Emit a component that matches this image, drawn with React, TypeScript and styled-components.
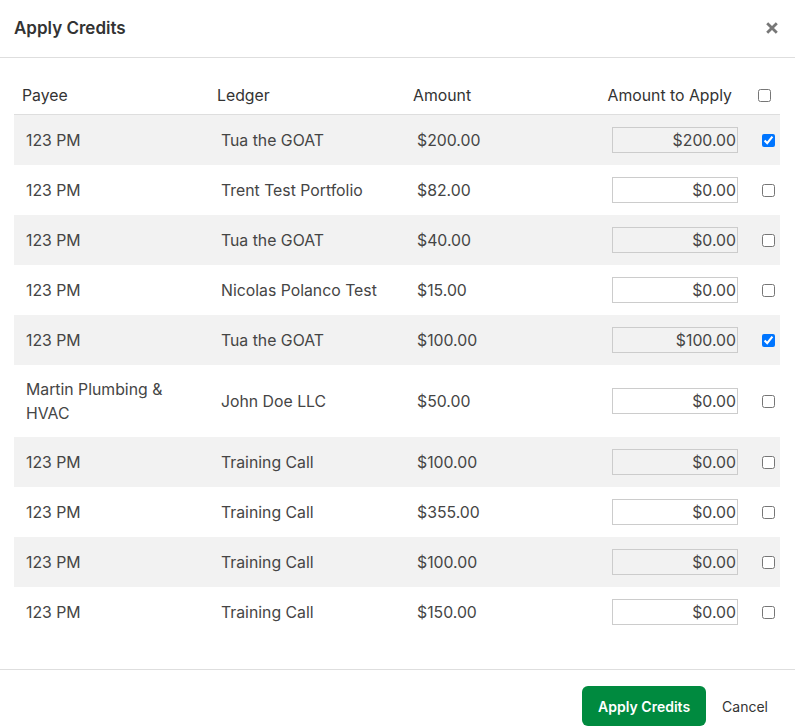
import styled, { createGlobalStyle } from 'styled-components';

const GlobalStyle = createGlobalStyle`
  html, body {
    margin: 0;
    padding: 0;
    background: #ffffff;
  }

  body {
    font-family: Inter, "Noto Sans", "Liberation Sans", sans-serif;
  }
`

const Modal = styled.div`
  width: 795px;
  height: 728px;
  background: #ffffff;
  display: flex;
  flex-direction: column;
  overflow: hidden;
`

const Header = styled.div`
  box-sizing: border-box;
  height: 58px;
  border-bottom: 1px solid #dedede;
  display: flex;
  align-items: center;
  justify-content: space-between;
  padding: 0 16px 1px 14px;
  flex-shrink: 0;
`

const Title = styled.h2`
  margin: 0;
  font-size: 17px;
  font-weight: 600;
  color: #333333;
`

const CloseButton = styled.button`
  border: none;
  background: none;
  padding: 0;
  width: 14px;
  height: 14px;
  display: flex;
  align-items: center;
  justify-content: center;
  cursor: pointer;
`

const Body = styled.div`
  flex: 1;
  padding: 17px 15px 0 14px;
`

const Table = styled.div`
  display: grid;
  grid-template-columns: 195px 196px 1fr 150px 30px;
`

const Row = styled.div`
  display: contents;
`

const HeadCell = styled.div<{ $right?: boolean; $padRight?: number }>`
  height: 38px;
  border-bottom: 1px solid #dedede;
  display: flex;
  align-items: center;
  justify-content: ${(p) => (p.$right ? 'flex-end' : 'flex-start')};
  padding: 1px ${(p) => p.$padRight ?? 8}px 0 ${(p) => (p.$right ? 0 : 8)}px;
  white-space: nowrap;
  font-size: 15.8px;
  color: #333333;
`

const Cell = styled.div<{ $shaded: boolean; $right?: boolean }>`
  background: ${(p) => (p.$shaded ? '#f2f2f2' : '#ffffff')};
  padding: 12px;
  display: flex;
  align-items: center;
  justify-content: ${(p) => (p.$right ? 'flex-end' : 'flex-start')};
  font-size: 15.8px;
  line-height: 24px;
  color: #454545;
`

const CellText = styled.span`
  position: relative;
  top: 1px;
`

const CheckCell = styled(Cell)`
  padding: 12px 0 12px 12px;
`

const AmountInput = styled.input`
  width: 126px;
  height: 26px;
  box-sizing: border-box;
  border: 1px solid #cccccc;
  background: transparent;
  text-align: right;
  padding: 0 1px 0 6px;
  font-family: inherit;
  font-size: 15.8px;
  color: #454545;
  outline: none;
`

const Check = styled.input`
  width: 13px;
  height: 13px;
  margin: 0;
  accent-color: #0075ff;
`

const Footer = styled.div`
  box-sizing: border-box;
  height: 59px;
  border-top: 1px solid #dedede;
  display: flex;
  align-items: flex-start;
  justify-content: flex-end;
  padding: 16px 15px 0 0;
  gap: 4px;
  flex-shrink: 0;
`

const PrimaryButton = styled.button`
  height: 40px;
  padding: 0 16px;
  border: none;
  border-radius: 6px;
  background: #008a3f;
  color: #ffffff;
  font-family: inherit;
  font-size: 14px;
  font-weight: 600;
  cursor: pointer;
`

const TextButton = styled.button`
  height: 40px;
  padding: 0 12px;
  border: none;
  background: none;
  color: #333333;
  font-family: inherit;
  font-size: 14px;
  cursor: pointer;
`

interface Credit {
  payee: string,
  ledger: string,
  amount: string,
  apply: string,
  checked: boolean,
}

const credits: Credit[] = [
  { payee: '123 PM', ledger: 'Tua the GOAT', amount: '$200.00', apply: '$200.00', checked: true },
  { payee: '123 PM', ledger: 'Trent Test Portfolio', amount: '$82.00', apply: '$0.00', checked: false },
  { payee: '123 PM', ledger: 'Tua the GOAT', amount: '$40.00', apply: '$0.00', checked: false },
  { payee: '123 PM', ledger: 'Nicolas Polanco Test', amount: '$15.00', apply: '$0.00', checked: false },
  { payee: '123 PM', ledger: 'Tua the GOAT', amount: '$100.00', apply: '$100.00', checked: true },
  { payee: 'Martin Plumbing & HVAC', ledger: 'John Doe LLC', amount: '$50.00', apply: '$0.00', checked: false },
  { payee: '123 PM', ledger: 'Training Call', amount: '$100.00', apply: '$0.00', checked: false },
  { payee: '123 PM', ledger: 'Training Call', amount: '$355.00', apply: '$0.00', checked: false },
  { payee: '123 PM', ledger: 'Training Call', amount: '$100.00', apply: '$0.00', checked: false },
  { payee: '123 PM', ledger: 'Training Call', amount: '$150.00', apply: '$0.00', checked: false },
];

const App = () => {
  return (
    <>
      <GlobalStyle />
      <Modal>
        <Header>
          <Title>Apply Credits</Title>
          <CloseButton aria-label="Close">
            <svg width="12" height="12" viewBox="0 0 12 12">
              <path d="M1.2 1.2 L10.8 10.8 M10.8 1.2 L1.2 10.8" stroke="#777777" strokeWidth="2.8" />
            </svg>
          </CloseButton>
        </Header>

        <Body>
          <Table>
            <Row>
              <HeadCell>Payee</HeadCell>
              <HeadCell>Ledger</HeadCell>
              <HeadCell>Amount</HeadCell>
              <HeadCell $right $padRight={18}>Amount to Apply</HeadCell>
              <HeadCell $padRight={0}>
                <Check type="checkbox" readOnly />
              </HeadCell>
            </Row>

            {credits.map((credit, i) => {
              const shaded = i % 2 === 0;
              return (
                <Row key={i}>
                  <Cell $shaded={shaded}><CellText>{credit.payee}</CellText></Cell>
                  <Cell $shaded={shaded}><CellText>{credit.ledger}</CellText></Cell>
                  <Cell $shaded={shaded}><CellText>{credit.amount}</CellText></Cell>
                  <Cell $shaded={shaded} $right>
                    <AmountInput type="text" defaultValue={credit.apply} />
                  </Cell>
                  <CheckCell $shaded={shaded}>
                    <Check type="checkbox" defaultChecked={credit.checked} />
                  </CheckCell>
                </Row>
              );
            })}
          </Table>
        </Body>

        <Footer>
          <PrimaryButton>Apply Credits</PrimaryButton>
          <TextButton>Cancel</TextButton>
        </Footer>
      </Modal>
    </>
  )
}

export default App;
